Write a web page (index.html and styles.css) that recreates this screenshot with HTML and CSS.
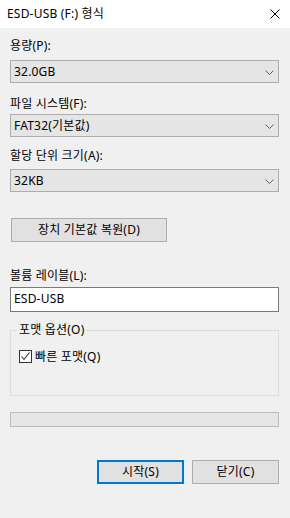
FILE: index.html
```html
<!DOCTYPE html>
<html lang="ko">
<head>
    <meta charset="UTF-8">
    <meta name="viewport" content="width=device-width, initial-scale=1.0">
    <title>ESD-USB (F:) 형식</title>
    <link rel="stylesheet" href="styles.css">
</head>
<body>
    <div class="titlebar">
        <span class="title">ESD-USB (F:) 형식</span>
        <svg class="close-icon" width="10" height="10" viewBox="0 0 10 10">
            <path d="M0.5 0.5 L9.5 9.5 M9.5 0.5 L0.5 9.5" stroke="#000" stroke-width="1" fill="none"/>
        </svg>
    </div>

    <div class="content">
        <div class="label first">용량(P):</div>
        <div class="combo c1">
            <span>32.0GB</span>
            <svg width="9" height="5" viewBox="0 0 9 5"><path d="M0.5 0.5 L4.5 4.5 L8.5 0.5" stroke="#606060" fill="none"/></svg>
        </div>

        <div class="label l2">파일 시스템(F):</div>
        <div class="combo c2">
            <span>FAT32(기본값)</span>
            <svg width="9" height="5" viewBox="0 0 9 5"><path d="M0.5 0.5 L4.5 4.5 L8.5 0.5" stroke="#606060" fill="none"/></svg>
        </div>

        <div class="label l3">할당 단위 크기(A):</div>
        <div class="combo c3">
            <span>32KB</span>
            <svg width="9" height="5" viewBox="0 0 9 5"><path d="M0.5 0.5 L4.5 4.5 L8.5 0.5" stroke="#606060" fill="none"/></svg>
        </div>

        <button class="btn restore">장치 기본값 복원(D)</button>

        <div class="label l4">볼륨 레이블(L):</div>
        <div class="textbox">ESD-USB</div>

        <fieldset class="group">
            <legend>포맷 옵션(O)</legend>
            <div class="check-row">
                <span class="checkbox">
                    <svg width="11" height="11" viewBox="0 0 11 11"><path d="M1.5 5.5 L4 8.5 L9.5 1.5" stroke="#333" stroke-width="1.1" fill="none"/></svg>
                </span>
                <span>빠른 포맷(Q)</span>
            </div>
        </fieldset>

        <div class="progress"></div>

        <div class="actions">
            <button class="btn primary">시작(S)</button>
            <button class="btn">닫기(C)</button>
        </div>
    </div>
</body>
</html>
```

FILE: styles.css
```css
* {
    box-sizing: border-box;
}
body {
    margin: 0;
    width: 290px;
    height: 518px;
    overflow: hidden;
    background: #f0f0f0;
    font-family: "Segoe UI", "Noto Sans", "Noto Sans CJK KR", sans-serif;
    font-size: 12px;
    line-height: 16px;
    letter-spacing: 0.2px;
    color: #000;
}
.titlebar {
    height: 28px;
    background: #fff;
    display: flex;
    align-items: center;
    justify-content: space-between;
    padding: 0 10px 0 7px;
}
.content {
    display: flex;
    flex-direction: column;
    padding: 0 11px 0 10px;
}
.label {
    height: 16px;
}
.label.first { margin-top: 10px; }
.label.l2 { margin-top: 13px; }
.label.l3 { margin-top: 11px; }
.label.l4 { margin-top: 26px; }
.combo {
    height: 23px;
    border: 1px solid #adadad;
    background: #e5e5e5;
    display: flex;
    align-items: center;
    justify-content: space-between;
    padding: 0 4px 0 3px;
}
.combo svg {
    margin-top: 1px;
}
.c1 { margin-top: 6px; }
.c2 { margin-top: 2px; }
.c3 { margin-top: 5px; }
.btn {
    font: inherit;
    letter-spacing: inherit;
    color: #000;
    height: 24px;
    width: 87px;
    border: 1px solid #adadad;
    background: #e1e1e1;
    padding: 0;
    text-align: center;
}
.restore {
    width: 156px;
    margin: 26px 0 0 1px;
    align-self: flex-start;
}
.textbox {
    margin-top: 3px;
    height: 25px;
    border: 1px solid #7a7a7a;
    background: #fff;
    padding: 3px 3px 0;
}
.group {
    margin: 10px 0 0;
    height: 74px;
    border: 1px solid #dcdcdc;
    padding: 0 6px;
    min-width: 0;
}
.group legend {
    padding: 0 2px;
    line-height: 16px;
}
.check-row {
    display: flex;
    align-items: center;
    gap: 3px;
    margin-top: 11px;
    height: 15px;
    padding-left: 2px;
}
.checkbox {
    width: 13px;
    height: 13px;
    border: 1px solid #333;
    background: #fff;
    display: flex;
    align-items: center;
    justify-content: center;
}
.progress {
    margin-top: 16px;
    height: 15px;
    border: 1px solid #bcbcbc;
    background: #e6e6e6;
}
.actions {
    margin-top: 33px;
    display: flex;
    justify-content: flex-end;
    gap: 8px;
}
.btn.primary {
    border: 2px solid #0078d7;
}
```
